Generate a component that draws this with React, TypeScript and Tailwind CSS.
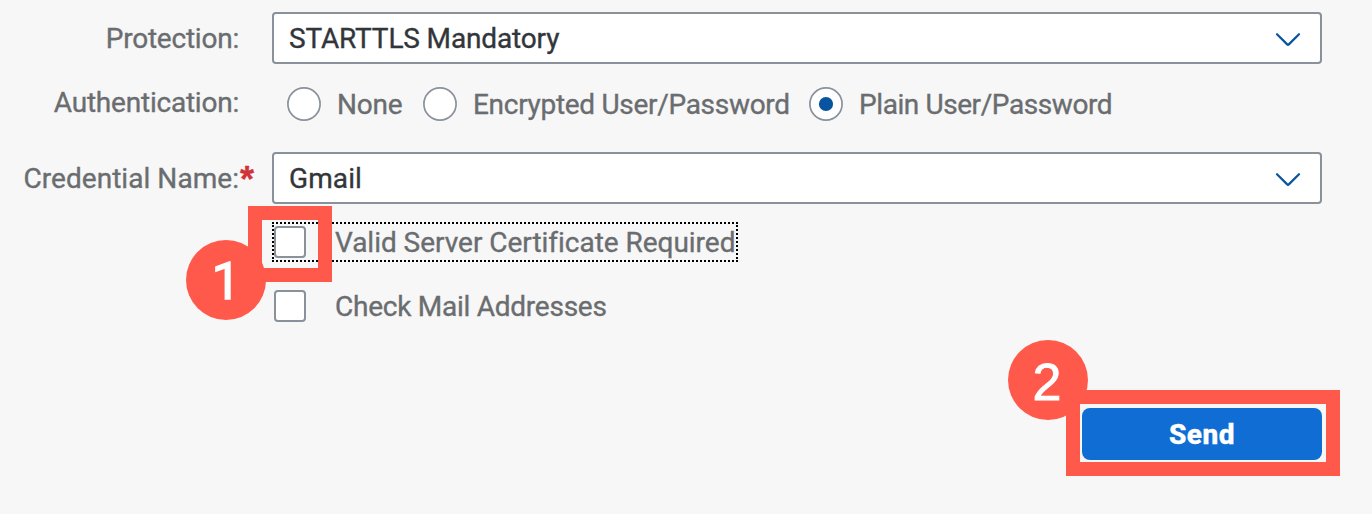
import React, { ReactNode } from "react";

function FieldLabel({ children, required = false, className = "" }: { children: ReactNode; required?: boolean; className?: string }) {
  return (
    <div className={`flex w-[272px] shrink-0 whitespace-nowrap text-[#6a6d70] ${className}`}>
      <span className="w-[239px] pt-0.5 text-right">{children}</span>
      {required && (
        <span className="ml-[1px] pt-[3px] font-['Liberation_Sans',sans-serif] text-[36px] leading-9 font-bold text-[#d0343a]">*</span>
      )}
    </div>
  );
}

function Select({ value, className = "" }: { value: string; className?: string }) {
  return (
    <div className="flex h-[52px] w-[1050px] items-center justify-between rounded border-2 border-[#89919a] bg-white pr-[18px] pl-[15px] text-[#32363a]">
      <span className={`pt-0.5 ${className}`}>{value}</span>
      <svg className="mt-0.5" width="28" height="20" viewBox="0 0 28 20" fill="none" stroke="#0854a0" strokeWidth="2.2" strokeLinecap="round" strokeLinejoin="round">
        <path d="M3 5.2 L13.2 15.4 Q14 16.2 14.8 15.4 L25 5.2" />
      </svg>
    </div>
  );
}

function Radio({ label, checked = false, className = "", box }: { label: string; checked?: boolean; className?: string; box: string }) {
  return (
    <div className={`flex shrink-0 items-center whitespace-nowrap ${box}`}>
      <svg className="mr-4 shrink-0" width="34" height="34" viewBox="0 0 34 34">
        <circle cx="17" cy="17" r="16.1" fill="#ffffff" stroke="#89919a" strokeWidth="1.7" />
        {checked && <circle cx="17" cy="17" r="7.1" fill="#0854a0" />}
      </svg>
      <span className={`pt-0.5 ${className}`}>{label}</span>
    </div>
  );
}

function Checkbox() {
  return <span className="size-8 shrink-0 rounded border-2 border-[#89919a] bg-white" />;
}

export default function App() {
  return (
    <main className="relative h-[514px] w-[1372px] overflow-hidden bg-[#f7f7f7] pt-3 font-['Roboto',sans-serif] text-[28px] leading-9 text-[#6a6d70] [-webkit-text-stroke-width:0.35px]">
      <div className="flex h-[52px] items-center">
        <FieldLabel className="tracking-[-0.22px]">Protection:</FieldLabel>
        <Select value="STARTTLS Mandatory" className="tracking-[-0.15px]" />
      </div>

      <div className="mt-4 flex h-12 items-center">
        <FieldLabel className="pb-1 tracking-[-0.22px]">Authentication:</FieldLabel>
        <div className="flex pl-[15px]">
          <Radio label="None" box="w-[136px]" className="tracking-[-0.2px]" />
          <Radio label="Encrypted User/Password" box="w-[386px]" className="tracking-[-0.3px]" />
          <Radio label="Plain User/Password" checked box="w-[320px]" className="tracking-[-0.42px]" />
        </div>
      </div>

      <div className="mt-6 flex h-[52px] items-center">
        <FieldLabel required className="h-[38px] tracking-[0.05px]">Credential Name:</FieldLabel>
        <Select value="Gmail" className="tracking-[0.1px]" />
      </div>

      <div className="mt-[18px] ml-[272px] flex h-10 w-[466px] items-center border-2 border-dotted border-black whitespace-nowrap">
        <Checkbox />
        <span className="ml-[29px] pt-0.5 tracking-[-0.03px]">Valid Server Certificate Required</span>
      </div>

      <div className="mt-7 ml-[274px] flex h-8 items-center whitespace-nowrap">
        <Checkbox />
        <span className="ml-[29px] pt-0.5 tracking-[-0.25px]">Check Mail Addresses</span>
      </div>

      <div className="mt-[86px] flex justify-end pr-[50px]">
        <button className="h-[52px] w-60 rounded-lg bg-[#0f6dd3] pt-0.5 font-extrabold tracking-[0.5px] text-white">Send</button>
      </div>

      <div className="absolute top-[206px] left-[248px] h-[76px] w-[84px] border-[14px] border-[#ff594c]" />
      <div className="absolute top-[240px] left-[186px] flex size-20 items-center justify-center rounded-full bg-[#ff594c] pt-1 text-[52px] text-white [-webkit-text-stroke-width:1.3px]">1</div>

      <div className="absolute top-[390px] left-[1066px] h-[86px] w-[274px] border-[14px] border-[#ff594c]" />
      <div className="absolute top-[340px] left-[1008px] flex size-20 items-center justify-center rounded-full bg-[#ff594c] pt-1 pr-0.5 font-['Liberation_Sans',sans-serif] text-[52px] text-white [-webkit-text-stroke-width:0.9px]">2</div>
    </main>
  );
}
